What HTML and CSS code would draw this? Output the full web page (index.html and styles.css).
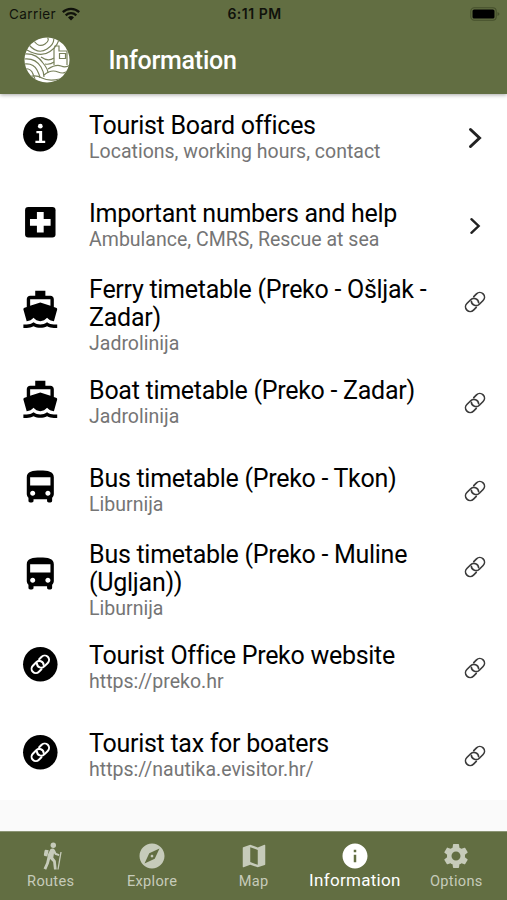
FILE: index.html
```html
<!DOCTYPE html>
<html lang="en">
  <head>
    <meta charset="UTF-8" />
    <meta name="viewport" content="width=device-width, initial-scale=1.0" />
    <title>Information</title>
    <link rel="stylesheet" href="styles.css">
  </head>
  <body>
    <!-- Shared icons -->
    <svg class="sprite" aria-hidden="true">
      <symbol id="icon-boat" viewBox="0 0 24 24">
        <path d="M20 21c-1.39 0-2.78-.47-4-1.32-2.44 1.71-5.56 1.71-8 0C6.78 20.53 5.39 21 4 21H2v2h2c1.38 0 2.74-.35 4-.99 2.52 1.29 5.48 1.29 8 0 1.26.65 2.62.99 4 .99h2v-2h-2zM3.95 19H4c1.6 0 3.02-.88 4-2 .98 1.12 2.4 2 4 2s3.02-.88 4-2c.98 1.12 2.4 2 4 2h.05l1.89-6.68c.08-.26.06-.54-.06-.78s-.34-.42-.6-.5L20 10.62V6c0-1.1-.9-2-2-2h-3V1H9v3H6c-1.1 0-2 .9-2 2v4.62l-1.29.42c-.26.08-.48.26-.6.5s-.15.52-.06.78L3.95 19zM6 6h12v3.97L12 8 6 9.97V6z" />
      </symbol>
      <symbol id="icon-bus" viewBox="0 0 24 24">
        <path d="M4 16c0 .88.39 1.67 1 2.22V20c0 .55.45 1 1 1h1c.55 0 1-.45 1-1v-1h8v1c0 .55.45 1 1 1h1c.55 0 1-.45 1-1v-1.78c.61-.55 1-1.34 1-2.22V6c0-3.5-3.58-4-8-4s-8 .5-8 4v10zm3.5 1c-.83 0-1.5-.67-1.5-1.5S6.67 14 7.5 14s1.5.67 1.5 1.5S8.33 17 7.5 17zm9 0c-.83 0-1.5-.67-1.5-1.5s.67-1.5 1.5-1.5 1.5.67 1.5 1.5-.67 1.5-1.5 1.5zm1.5-6H6V6h12v5z" />
      </symbol>
      <symbol id="icon-link" viewBox="0 0 24 24">
        <g fill="none" stroke="currentColor" stroke-linecap="round" transform="rotate(-45 12 12)">
          <path d="M8.8 17.1H4.6a5.1 5.1 0 0 1 0-10.2h5.800a5.100 5.100 0 0 1 3.800 8.500" />
          <path d="M15.200 6.900h4.200a5.100 5.100 0 0 1 0 10.200h-5.800a5.100 5.100 0 0 1-3.800-8.500" />
        </g>
      </symbol>
      <symbol id="icon-chevron" viewBox="0 0 24 24">
        <path d="M7.5 3.5l9 8.5-9 8.5" fill="none" stroke="currentColor" stroke-width="3" stroke-linecap="round" />
      </symbol>
      <symbol id="icon-link-circle" viewBox="0 0 24 24">
        <circle cx="12" cy="12" r="10.2" />
        <use href="#icon-link" x="6" y="6" width="12" height="12" class="link-inner" />
      </symbol>
    </svg>

    <header class="app-header">
      <div class="status-bar">
        <div class="carrier">
          <span>Carrier</span>
          <svg class="wifi" viewBox="0 0 18 14">
            <path d="M9 13.5l-3-3.1a4.4 4.4 0 0 1 6 0z" />
            <g fill="none" stroke="currentColor" stroke-width="2.3">
              <path d="M3.7 8.3a7.7 7.7 0 0 1 10.6 0" />
              <path d="M.8 5.2a11.9 11.9 0 0 1 16.4 0" />
            </g>
          </svg>
        </div>
        <div class="time">6:11 PM</div>
        <svg class="battery" viewBox="0 0 30 14">
          <rect x=".8" y=".8" width="25.4" height="12.4" rx="3.5" fill="none" stroke="#46502c" stroke-width="1.1" />
          <rect x="2.5" y="2.5" width="22" height="9" rx="1.6" />
          <path d="M27.5 5v4q2-.8 2-2t-2-2z" fill="#46502c" />
        </svg>
      </div>
      <div class="toolbar">
        <svg class="logo" viewBox="0 0 46 46">
          <clipPath id="logoClip"><circle cx="23" cy="23" r="22.5" /></clipPath>
          <circle cx="23" cy="23" r="22.5" fill="#fff" />
          <g clip-path="url(#logoClip)" fill="none" stroke="#78815b" stroke-width="1.2">
            <path d="M10 4q5 7 11 3t1-8" />
            <path d="M5 8q9 10 18 4t6-13" />
            <path d="M3 13q14 8 23 1.5t9-14" />
            <path d="M0 17c9-1 15 3 19 9 4 5 5 9 5 10" />
            <path d="M0 22c9-1 14 3 17 8s3 8 3 10" />
            <path d="M0 27c7-1 11 2 13 6s3 6 3 8" />
            <path d="M0 32c5-1 8 2 9 5s2 4 2 6" />
            <path d="M17 20q7 5 13 1M21 27q5 1 9-2" />
            <path d="M30 28V12l1-3h4v5h8v14M35.5 16.5h6v5h-6z" />
            <path d="M20 38q7-6 14-3t12-3M0 43q9-7 18-2t28-2" />
            <path d="M24 32q8-5 13-3t9-1" />
          </g>
        </svg>
        <h1>Information</h1>
      </div>
    </header>

    <main class="list">
      <a class="item">
        <svg class="item-icon" viewBox="0 0 24 24">
          <circle cx="12" cy="12" r="10.2" />
          <g fill="#fff">
            <circle cx="12" cy="7.2" r="1.4" />
            <path d="M9.7 10h3.4v5.8h1.8v1.4H9.1v-1.4h2.2v-4.4H9.7z" />
          </g>
        </svg>
        <div class="item-text">
          <div class="title">Tourist Board offices</div>
          <div class="subtitle">Locations, working hours, contact</div>
        </div>
        <svg class="item-action chevron-large"><use href="#icon-chevron" /></svg>
      </a>
      <a class="item">
        <svg class="item-icon" viewBox="0 0 24 24">
          <rect x="3" y="3" width="18" height="18" rx="1.9" />
          <path d="M12 5.900v12.200M5.900 12h12.200" stroke="#fff" stroke-width="4" />
        </svg>
        <div class="item-text">
          <div class="title">Important numbers and help</div>
          <div class="subtitle">Ambulance, CMRS, Rescue at sea</div>
        </div>
        <svg class="item-action chevron"><use href="#icon-chevron" /></svg>
      </a>
      <a class="item tall">
        <svg class="item-icon"><use href="#icon-boat" /></svg>
        <div class="item-text">
          <div class="title">Ferry timetable (Preko - Ošljak -<br>Zadar)</div>
          <div class="subtitle">Jadrolinija</div>
        </div>
        <svg class="item-action link"><use href="#icon-link" /></svg>
      </a>
      <a class="item">
        <svg class="item-icon"><use href="#icon-boat" /></svg>
        <div class="item-text">
          <div class="title">Boat timetable (Preko - Zadar)</div>
          <div class="subtitle">Jadrolinija</div>
        </div>
        <svg class="item-action link"><use href="#icon-link" /></svg>
      </a>
      <a class="item">
        <svg class="item-icon"><use href="#icon-bus" /></svg>
        <div class="item-text">
          <div class="title">Bus timetable (Preko - Tkon)</div>
          <div class="subtitle">Liburnija</div>
        </div>
        <svg class="item-action link"><use href="#icon-link" /></svg>
      </a>
      <a class="item tall">
        <svg class="item-icon"><use href="#icon-bus" /></svg>
        <div class="item-text">
          <div class="title">Bus timetable (Preko - Muline<br>(Ugljan))</div>
          <div class="subtitle">Liburnija</div>
        </div>
        <svg class="item-action link"><use href="#icon-link" /></svg>
      </a>
      <a class="item">
        <svg class="item-icon"><use href="#icon-link-circle" /></svg>
        <div class="item-text">
          <div class="title">Tourist Office Preko website</div>
          <div class="subtitle">https://preko.hr</div>
        </div>
        <svg class="item-action link"><use href="#icon-link" /></svg>
      </a>
      <a class="item">
        <svg class="item-icon"><use href="#icon-link-circle" /></svg>
        <div class="item-text">
          <div class="title">Tourist tax for boaters</div>
          <div class="subtitle">https://nautika.evisitor.hr/</div>
        </div>
        <svg class="item-action link"><use href="#icon-link" /></svg>
      </a>
    </main>

    <nav class="tab-bar">
      <a class="tab">
        <svg viewBox="0 0 30 30">
          <circle cx="17.3" cy="4.3" r="2.7" />
          <path d="M14.4 8.2q2.9-1.5 4.5.8l1.4 3.1 3.1 1.2-.5 1.7-4-1.2-.9-1.5-.7 4.1 2.5 3.3.9 8.800h-2.700l-.9-7.400-3-3-1.200 4.500-2.700 6.100-2.600-1.100 2.600-5.900 1.900-8.700z" />
          <path d="M9.600 8.700l3.100.5-1.400 6.300-2.500-.5q-1.200-.3-.9-1.600l.6-3.500q.3-1.200 1.100-1.200z" />
          <path d="M25 11l-3 17.500" fill="none" stroke="currentColor" stroke-width="1.3" />
        </svg>
        <span>Routes</span>
      </a>
      <a class="tab">
        <svg viewBox="0 0 24 24">
          <path d="M12 10.9c-.61 0-1.1.49-1.1 1.1s.49 1.1 1.1 1.1c.61 0 1.1-.49 1.1-1.1s-.49-1.1-1.1-1.1zM12 2C6.48 2 2 6.48 2 12s4.48 10 10 10 10-4.48 10-10S17.52 2 12 2zm2.19 12.19L6 18l3.81-8.19L18 6l-3.81 8.19z" />
        </svg>
        <span>Explore</span>
      </a>
      <a class="tab">
        <svg viewBox="0 0 24 24">
          <path d="M20.5 3l-.16.03L15 5.1 9 3 3.36 4.9c-.21.07-.36.25-.36.48V20.5c0 .28.22.5.5.5l.16-.03L9 18.9l6 2.1 5.64-1.9c.21-.07.36-.25.36-.48V3.5c0-.28-.22-.5-.5-.5zM15 19l-6-2.11V5l6 2.11V19z" />
        </svg>
        <span>Map</span>
      </a>
      <a class="tab active">
        <svg viewBox="0 0 24 24">
          <path d="M12 2C6.48 2 2 6.48 2 12s4.48 10 10 10 10-4.48 10-10S17.52 2 12 2zm1 15h-2v-6h2v6zm0-8h-2V7h2v2z" />
        </svg>
        <span>Information</span>
      </a>
      <a class="tab">
        <svg viewBox="0 0 24 24">
          <path d="M19.14 12.94c.04-.3.06-.61.06-.94 0-.32-.02-.64-.07-.94l2.03-1.58c.18-.14.23-.41.12-.61l-1.92-3.32c-.12-.22-.37-.29-.59-.22l-2.39.96c-.5-.38-1.03-.7-1.62-.94l-.36-2.54c-.04-.24-.24-.41-.48-.41h-3.84c-.24 0-.43.17-.47.41l-.36 2.54c-.59.24-1.13.57-1.62.94l-2.39-.96c-.22-.08-.47 0-.59.22L2.74 8.87c-.12.21-.08.47.12.61l2.03 1.58c-.05.3-.09.63-.09.94s.02.64.07.94l-2.03 1.58c-.18.14-.23.41-.12.61l1.92 3.32c.12.22.37.29.59.22l2.39-.96c.5.38 1.03.7 1.62.94l.36 2.54c.05.24.24.41.48.41h3.84c.24 0 .44-.17.47-.41l.36-2.54c.59-.24 1.13-.56 1.62-.94l2.39.96c.22.08.47 0 .59-.22l1.92-3.32c.12-.22.07-.47-.12-.61l-2.01-1.58zM12 15.6c-1.98 0-3.6-1.62-3.6-3.6s1.62-3.6 3.6-3.6 3.6 1.62 3.6 3.6-1.62 3.6-3.6 3.6z" />
        </svg>
        <span>Options</span>
      </a>
    </nav>
  </body>
</html>
```
FILE: styles.css
```css
* {
  box-sizing: border-box;
}
body {
  margin: 0;
  height: 900px;
  display: flex;
  flex-direction: column;
  overflow: hidden;
  background-color: #fafafa;
  font-family: Roboto, "Liberation Sans", sans-serif;
}
svg {
  display: block;
  flex-shrink: 0;
  fill: currentColor;
}
.sprite {
  position: absolute;
  width: 0;
  height: 0;
}
.app-header {
  position: relative;
  height: 94px;
  flex-shrink: 0;
  background-color: #626e42;
  box-shadow: 0 1px 4px rgba(0, 0, 0, 0.35);
}
.status-bar {
  display: grid;
  grid-template-columns: 1fr auto 1fr;
  align-items: center;
  height: 27px;
  padding: 0 7px 0 9px;
  font-family: Inter, sans-serif;
  font-size: 13.5px;
  color: #10120b;
}
.carrier {
  display: flex;
  align-items: center;
  gap: 6px;
  letter-spacing: 0.4px;
}
.wifi {
  width: 18px;
  height: 14px;
}
.time {
  font-size: 14px;
  font-weight: 600;
  letter-spacing: 0.5px;
}
.battery {
  width: 30px;
  height: 14px;
  justify-self: end;
  color: #000;
}
.toolbar {
  display: flex;
  align-items: center;
  height: 66px;
  padding-left: 24px;
}
.logo {
  width: 46px;
  height: 46px;
}
h1 {
  margin: 1px 0 0 38.5px;
  font-size: 25px;
  font-weight: 500;
  letter-spacing: -0.25px;
  color: #fff;
}
.list {
  height: 706px;
  flex-shrink: 0;
  background-color: #fff;
}
.item {
  display: flex;
  height: 88px;
  padding: 17px 20px 0 20px;
  color: #000;
}
.item.tall {
  height: 89px;
  padding-top: 5px;
}
.item-icon {
  width: 40.6px;
  height: 40.6px;
  margin-top: 3px;
}
.tall .item-icon {
  margin-top: 14px;
}
.item-text {
  flex: 1;
  margin: 1px 0 0 28.5px;
  white-space: nowrap;
}
.title {
  font-size: 25px;
  line-height: 28px;
  letter-spacing: -0.28px;
}
.subtitle {
  font-size: 19.5px;
  line-height: 23px;
  color: #757575;
}
.item-action {
  width: 24px;
  height: 24px;
  margin-top: 15px;
  color: #222;
}
.chevron {
  transform: scale(0.8);
}
.link {
  width: 22px;
  height: 22px;
  margin: 16px 1px 0;
  color: #3a3a3a;
  stroke-width: 1.8;
}
.link-inner {
  color: #fff;
  stroke-width: 2.4;
}
.tab-bar {
  display: flex;
  height: 69px;
  margin-top: auto;
  flex-shrink: 0;
  background-color: #626e42;
  border-top: 1px solid #8c9575;
}
.tab {
  flex: 1;
  display: flex;
  flex-direction: column;
  align-items: center;
  padding-top: 9px;
  font-size: 14.6px;
  color: #c6cbba;
}
.tab svg {
  width: 30px;
  height: 30px;
}
.tab span {
  line-height: 20px;
  letter-spacing: 0.3px;
}
.tab.active {
  color: #fff;
}
.tab.active span {
  margin-top: -1px;
  font-size: 17px;
}
```
